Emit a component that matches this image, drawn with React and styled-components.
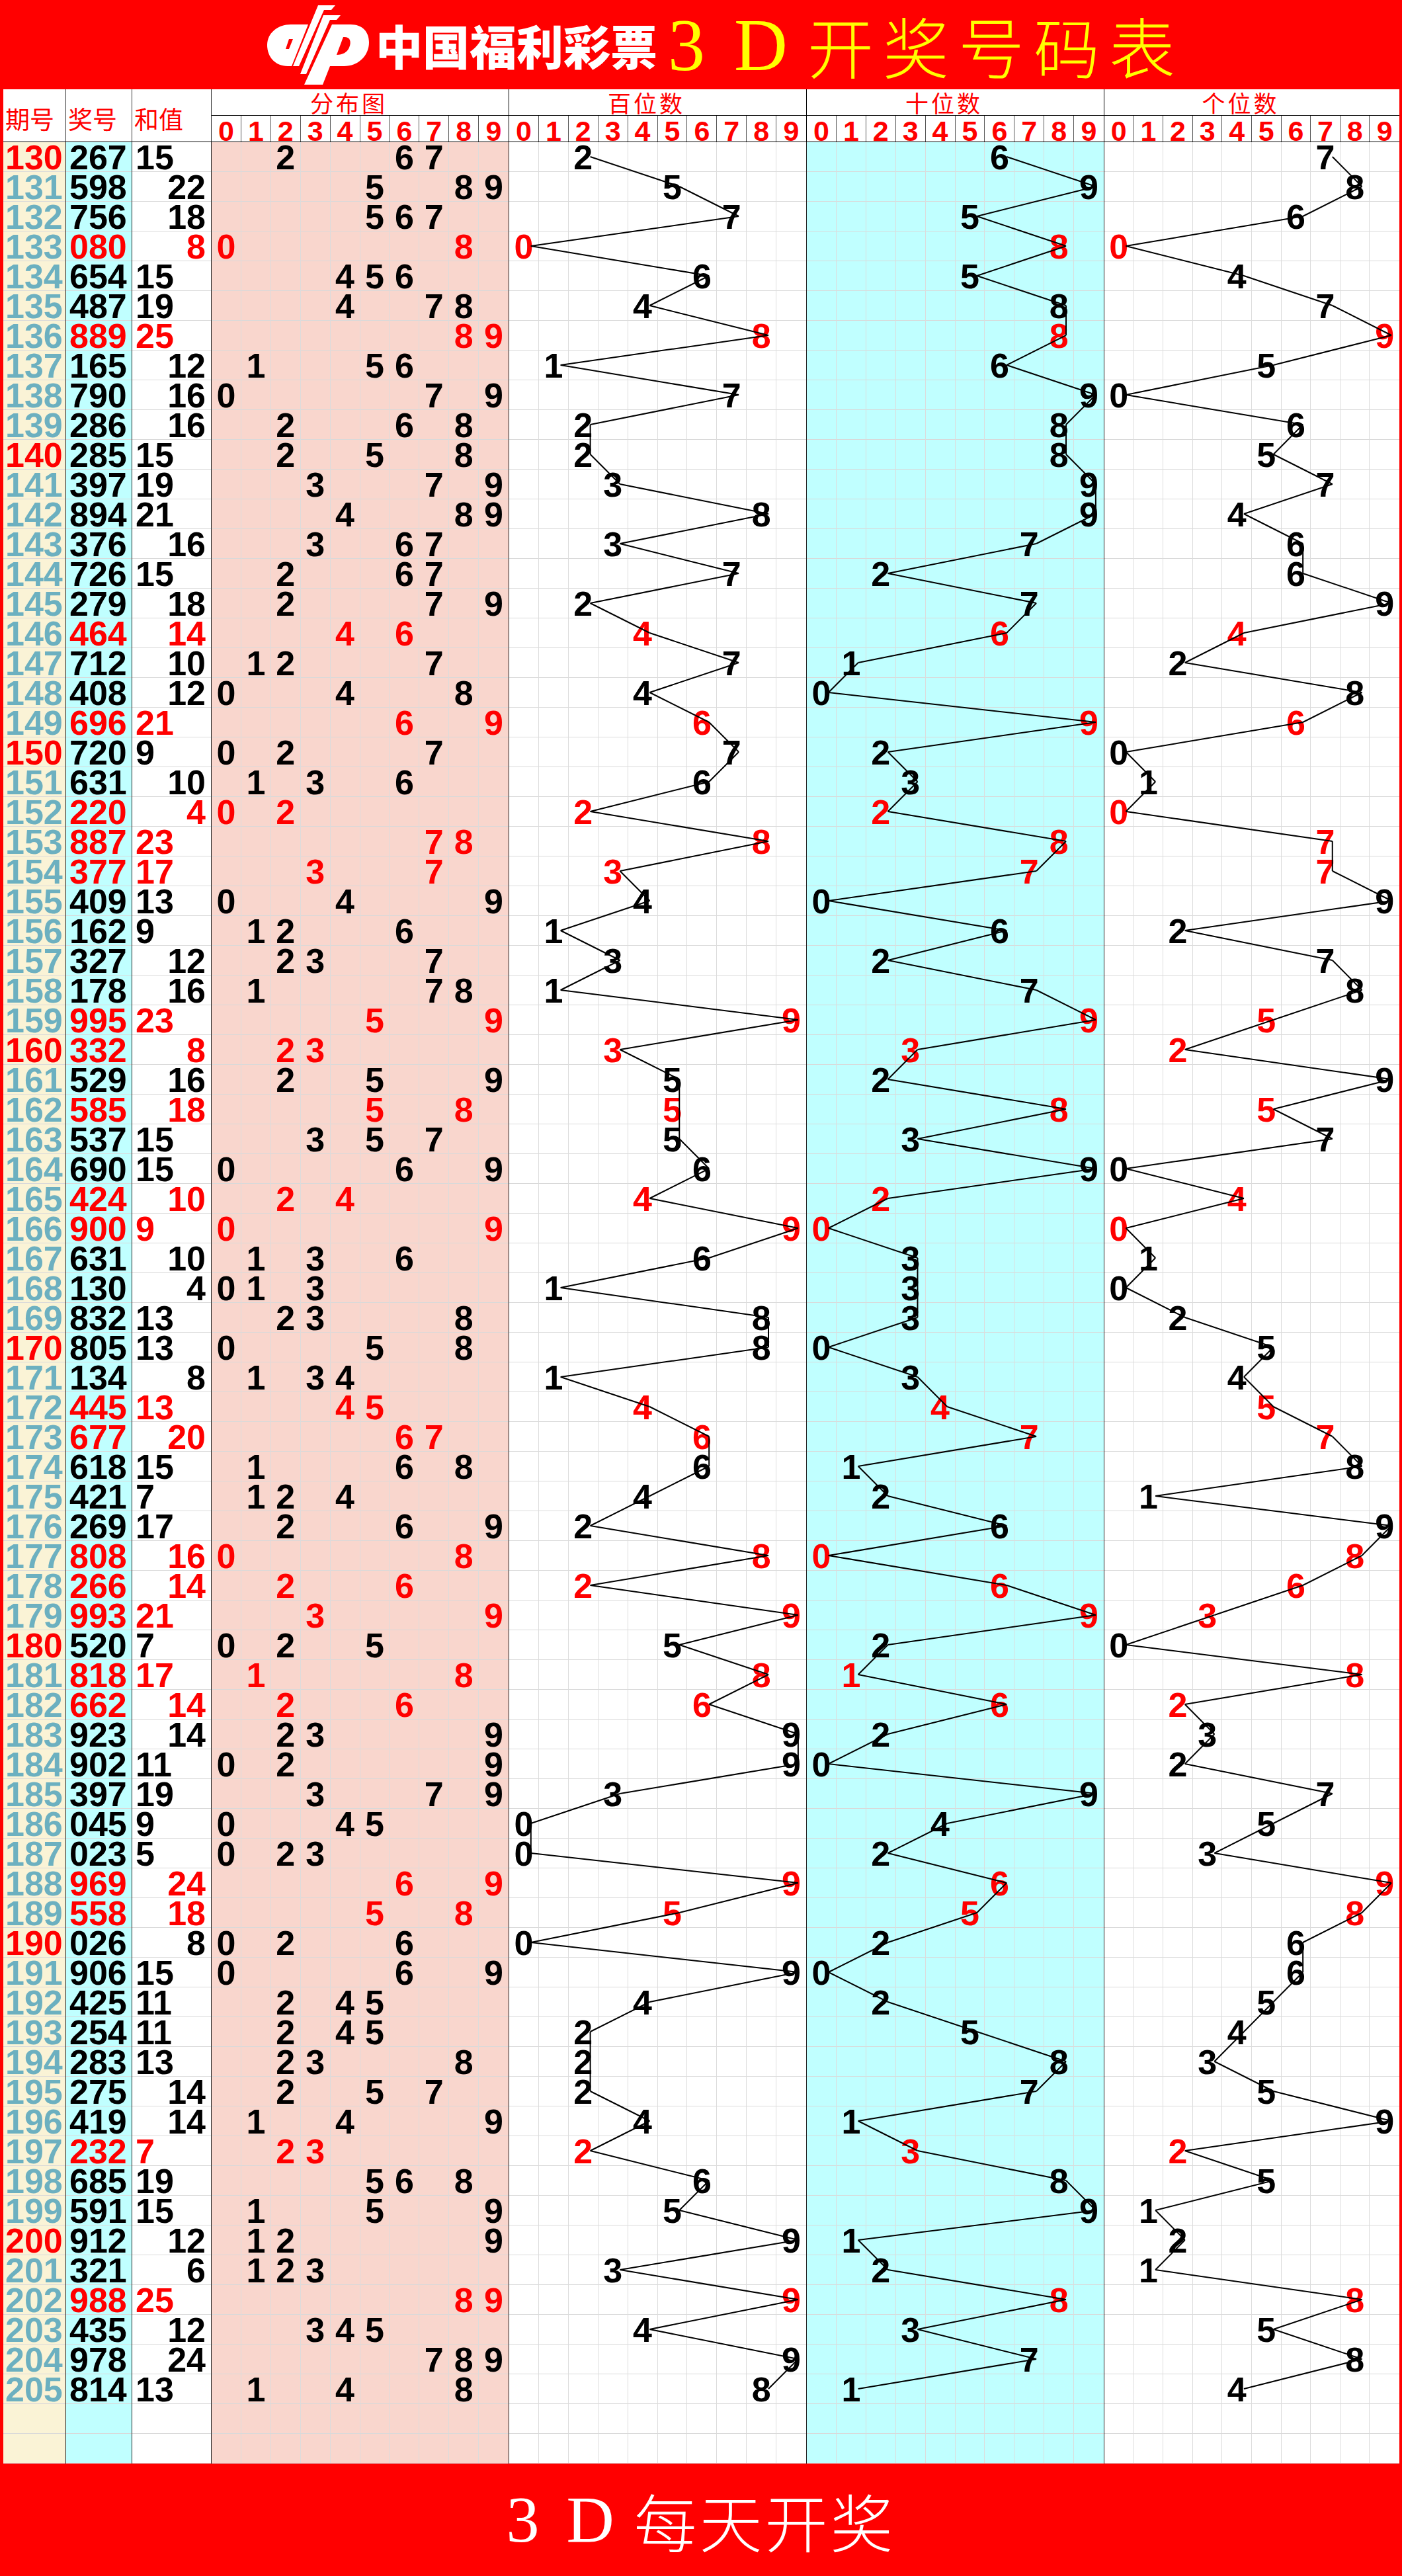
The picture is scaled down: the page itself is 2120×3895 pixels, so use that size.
import React from 'react';
import styled, {createGlobalStyle} from 'styled-components';

const ROW = 45;

const numbers = [
  '267', '598', '756', '080', '654', '487', '889', '165', '790', '286',
  '285', '397', '894', '376', '726', '279', '464', '712', '408', '696',
  '720', '631', '220', '887', '377', '409', '162', '327', '178', '995',
  '332', '529', '585', '537', '690', '424', '900', '631', '130', '832',
  '805', '134', '445', '677', '618', '421', '269', '808', '266', '993',
  '520', '818', '662', '923', '902', '397', '045', '023', '969', '558',
  '026', '906', '425', '254', '283', '275', '419', '232', '685', '591',
  '912', '321', '988', '435', '978', '814',
];

const rows = numbers.map((n, i) => {
  const d = n.split('').map(Number);
  return {
    period: 130 + i,
    n,
    d,
    sum: d[0] + d[1] + d[2],
    pair: new Set(d).size === 2,
  };
});

const BLANK_ROWS = 2;
const digits = [0, 1, 2, 3, 4, 5, 6, 7, 8, 9];

const GlobalStyle = createGlobalStyle`
  * { box-sizing: border-box; }
  body {
    margin: 0;
    background: #ff0000;
  }
`;

const Page = styled.div`
  width: 2120px;
  background: #ff0000;
`;

const TitleBar = styled.header`
  height: 135px;
  display: flex;
  align-items: center;
  padding-left: 400px;
`;

const Brand = styled.div`
  font-family: "Noto Sans CJK SC", sans-serif;
  font-weight: 900;
  font-size: 71px;
  line-height: 1;
  color: #fff;
  white-space: nowrap;
`;

const Title = styled.div`
  margin-left: 16px;
  color: #ffff00;
  display: flex;
  align-items: center;
  white-space: nowrap;
`;

const Latin = styled.span`
  font-family: "Liberation Serif", serif;
  font-size: ${p => p.$size}px;
  line-height: 1;
  letter-spacing: 8px;
`;

const Han = styled.span`
  font-family: "Noto Sans CJK SC", sans-serif;
  font-weight: 300;
  font-size: ${p => p.$size}px;
  line-height: 1;
  letter-spacing: ${p => p.$gap}px;
  margin-left: 22px;
`;

const Sheet = styled.div`
  margin: 0 4px 0 5px;
  background: #fff;
`;

const HeadRow = styled.div`
  display: flex;
  height: 80px;
  border-bottom: 1px solid #000;
`;

const HeadCell = styled.div`
  width: ${p => p.$w}px;
  border-right: 1px solid #333;
  display: flex;
  align-items: center;
  padding: 8px 0 0 3px;
  font-family: "Noto Sans CJK SC", sans-serif;
  font-size: 37px;
  color: #ff0000;
  white-space: nowrap;
`;

const HeadGroup = styled.div`
  width: ${p => (p.$grow ? 'auto' : '450px')};
  flex: ${p => (p.$grow ? 1 : 'none')};
  border-right: ${p => (p.$grow ? 'none' : '1px solid #000')};
  display: flex;
  flex-direction: column;
`;

const GroupTitle = styled.div`
  height: 40px;
  border-bottom: 1px solid #000;
  display: flex;
  align-items: center;
  justify-content: center;
  padding-right: 34px;
  font-family: "Noto Sans CJK SC", sans-serif;
  font-size: 35px;
  letter-spacing: 4px;
  color: #ff0000;
`;

const DigitHeads = styled.div`
  flex: 1;
  display: grid;
  grid-template-columns: repeat(10, 1fr);
`;

const DigitHead = styled.div`
  height: 39px;
  border-right: ${p => (p.$last ? 'none' : '1px solid #555')};
  text-align: center;
  font-family: "Liberation Sans", Arial, sans-serif;
  font-weight: bold;
  font-size: 43px;
  line-height: 46px;
  color: #ff0000;
  overflow: visible;
`;

const Body = styled.div`
  display: flex;
`;

const InfoCol = styled.div`
  width: ${p => p.$w}px;
  background: ${p => p.$bg};
  border-right: 1px solid #222;
`;

const InfoCell = styled.div`
  height: ${ROW}px;
  border-bottom: 1px solid #d9d9d9;
  padding: 0 8px 0 ${p => p.$pad}px;
  text-align: ${p => p.$align};
  font-family: "Liberation Sans", Arial, sans-serif;
  font-weight: bold;
  font-size: 52px;
  line-height: 46px;
  color: ${p => p.$color};
  white-space: nowrap;
`;

const GridSection = styled.div`
  position: relative;
  width: ${p => (p.$grow ? 'auto' : '450px')};
  flex: ${p => (p.$grow ? 1 : 'none')};
  background: ${p => p.$bg};
  border-right: ${p => (p.$grow ? 'none' : '1px solid #222')};
`;

const DigitRow = styled.div`
  display: grid;
  grid-template-columns: repeat(10, 1fr);
  height: ${ROW}px;
  border-bottom: 1px solid #d9d9d9;
`;

const Slot = styled.div`
  border-right: ${p => (p.$last ? 'none' : '1px solid #dcdcdc')};
  text-align: center;
  font-family: "Liberation Sans", Arial, sans-serif;
  font-weight: bold;
  font-size: 52px;
  line-height: 46px;
  color: ${p => (p.$red ? '#ff0000' : '#000')};
`;

const Trace = styled.svg`
  position: absolute;
  top: 0;
  left: 0;
  width: 100%;
  height: 100%;
  overflow: visible;
  pointer-events: none;
`;

const Footer = styled.footer`
  height: 170px;
  display: flex;
  align-items: center;
  justify-content: center;
  color: #fff;
  white-space: nowrap;
`;

function Logo() {
  return (
    <svg width="168" height="135" viewBox="20 0 168 135">
      <path d="M86 37 L61 100 L55 100 C36 100 24 86 24 68 C24 50 40 37 60 37 Z" fill="#fff" />
      <path d="M63 59 L57 74 L52 74 L57 59 Z" fill="#ff0000" />
      <polygon points="101,8 127,8 121,15 110,15 72,100 63,100" fill="#fff" />
      <polygon points="109,23 135,23 129,30 119,30 83,112 74,112" fill="#fff" />
      <path d="M122 37 L150 37 C168 37 178 48 178 64 C178 84 162 100 140 100 L119 100 L108 128 L80 128 Z" fill="#fff" />
      <path d="M139 56 C149 55 152 62 148 72 C145 79 138 83 129 83 Z" fill="#ff0000" />
    </svg>
  );
}

const anchorX = d => `${(d + 0.73) * 10}%`;
const anchorY = i => i * ROW + 22;

function PositionSection({place, bg, grow}) {
  return (
    <GridSection $bg={bg} $grow={grow}>
      {rows.map(r => (
        <DigitRow key={r.period}>
          {digits.map(k => (
            <Slot key={k} $last={k === 9} $red={r.pair}>
              {r.d[place] === k ? k : ''}
            </Slot>
          ))}
        </DigitRow>
      ))}
      {Array.from({length: BLANK_ROWS}, (_, i) => (
        <DigitRow key={`b${i}`}>
          {digits.map(k => (
            <Slot key={k} $last={k === 9} />
          ))}
        </DigitRow>
      ))}
      <Trace>
        {rows.slice(1).map((r, i) => (
          <line
            key={r.period}
            x1={anchorX(rows[i].d[place])}
            y1={anchorY(i)}
            x2={anchorX(r.d[place])}
            y2={anchorY(i + 1)}
            stroke="#000"
            strokeWidth="2"
          />
        ))}
      </Trace>
    </GridSection>
  );
}

function DistSection() {
  return (
    <GridSection $bg="#f9d6cd">
      {rows.map(r => (
        <DigitRow key={r.period}>
          {digits.map(k => (
            <Slot key={k} $last={k === 9} $red={r.pair}>
              {r.d.includes(k) ? k : ''}
            </Slot>
          ))}
        </DigitRow>
      ))}
      {Array.from({length: BLANK_ROWS}, (_, i) => (
        <DigitRow key={`b${i}`}>
          {digits.map(k => (
            <Slot key={k} $last={k === 9} />
          ))}
        </DigitRow>
      ))}
    </GridSection>
  );
}

function Group({title, grow}) {
  return (
    <HeadGroup $grow={grow}>
      <GroupTitle>{title}</GroupTitle>
      <DigitHeads>
        {digits.map(k => (
          <DigitHead key={k} $last={k === 9}>
            {k}
          </DigitHead>
        ))}
      </DigitHeads>
    </HeadGroup>
  );
}

export default function App() {
  const blanks = Array.from({length: BLANK_ROWS}, (_, i) => i);
  return (
    <Page>
      <GlobalStyle />
      <TitleBar>
        <Logo />
        <Brand>中国福利彩票</Brand>
        <Title>
          <Latin $size={112}>3 D</Latin>
          <Han $size={100} $gap={14}>开奖号码表</Han>
        </Title>
      </TitleBar>

      <Sheet>
        <HeadRow>
          <HeadCell $w={95}>期号</HeadCell>
          <HeadCell $w={100}>奖号</HeadCell>
          <HeadCell $w={120}>和值</HeadCell>
          <Group title="分布图" />
          <Group title="百位数" />
          <Group title="十位数" />
          <Group title="个位数" grow />
        </HeadRow>

        <Body>
          <InfoCol $w={95} $bg="#faf3d6">
            {rows.map(r => (
              <InfoCell key={r.period} $pad={3} $align="left" $color={r.period % 10 === 0 ? '#ff0000' : '#6cb0c0'}>
                {r.period}
              </InfoCell>
            ))}
            {blanks.map(i => <InfoCell key={i} />)}
          </InfoCol>
          <InfoCol $w={100} $bg="#c0ffff">
            {rows.map(r => (
              <InfoCell key={r.period} $pad={5} $align="left" $color={r.pair ? '#ff0000' : '#000'}>
                {r.n}
              </InfoCell>
            ))}
            {blanks.map(i => <InfoCell key={i} />)}
          </InfoCol>
          <InfoCol $w={120} $bg="#fff">
            {rows.map(r => (
              <InfoCell
                key={r.period}
                $pad={5}
                $align={r.sum % 2 ? 'left' : 'right'}
                $color={r.pair ? '#ff0000' : '#000'}
              >
                {r.sum}
              </InfoCell>
            ))}
            {blanks.map(i => <InfoCell key={i} />)}
          </InfoCol>
          <DistSection />
          <PositionSection place={0} bg="#fff" />
          <PositionSection place={1} bg="#c0ffff" />
          <PositionSection place={2} bg="#fff" grow />
        </Body>
      </Sheet>

      <Footer>
        <Latin $size={100}>3 D</Latin>
        <Han $size={95} $gap={4}>每天开奖</Han>
      </Footer>
    </Page>
  );
}
